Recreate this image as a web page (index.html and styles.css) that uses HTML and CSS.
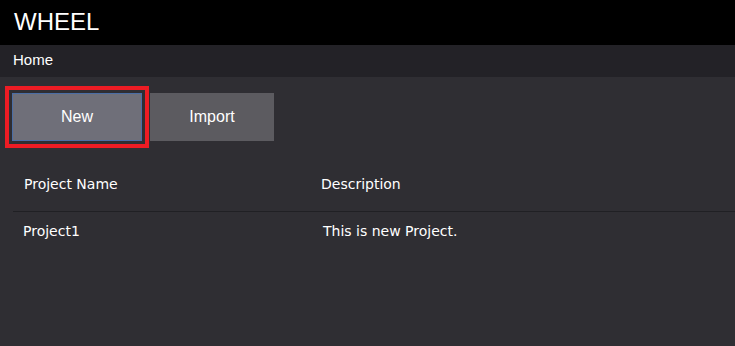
FILE: index.html
```html
<html>
  <head>
    <title>WHEEL</title>
    <link rel="stylesheet" href="styles.css">
  </head>
  <body>
    <div class="header">WHEEL</div>
    <div class="nav">Home</div>
    <div class="main">
      <div class="actions">
        <button class="btn btn-new">New</button>
        <button class="btn btn-import">Import</button>
      </div>
      <div class="table">
        <div class="row head">
          <div class="cell">Project Name</div>
          <div class="cell">Description</div>
        </div>
        <div class="row">
          <div class="cell">Project1</div>
          <div class="cell">This is new Project.</div>
        </div>
      </div>
    </div>
  </body>
</html>
```
FILE: styles.css
```css
* {box-sizing: border-box;}
html, body {margin: 0; height: 100%;}
body {background: #2f2e33; color: #fff; font-family: "Liberation Sans", Arial, sans-serif; display: flex; flex-direction: column;}
.header {background: #000; height: 45px; padding: 7px 0 0 14px; font-size: 24px; line-height: 30px;}
.nav {background: #232227; height: 32px; padding: 6px 0 0 13px; font-size: 15px; line-height: 18px;}
.main {flex: 1; padding: 16px 0 0 12px;}
.actions {display: flex; gap: 8px;}
.btn {height: 48px; font-family: "Liberation Sans", Arial, sans-serif; font-size: 16px; color: #fff; border: none; padding: 0; cursor: pointer;}
.btn-new {width: 130px; background: #6f6f79; border: 1px solid #4b6ea6; outline: 4px solid #ed1c24; outline-offset: 3px;}
.btn-import {width: 124px; background: #5c5b60;}
.table {margin: 22px 0 0 1px; font-family: "DejaVu Sans", sans-serif; font-size: 14px; line-height: 16px;}
.row {display: grid; grid-template-columns: 297px 1fr;}
.row .cell {padding: 11px 11px 0 10px;}
.row .cell + .cell {padding-left: 13px;}
.row.head {border-bottom: 1px solid #202024;}
.row.head .cell {padding: 13px 11px 19px 11px;}
.row.head .cell + .cell {padding-left: 11px;}
```
